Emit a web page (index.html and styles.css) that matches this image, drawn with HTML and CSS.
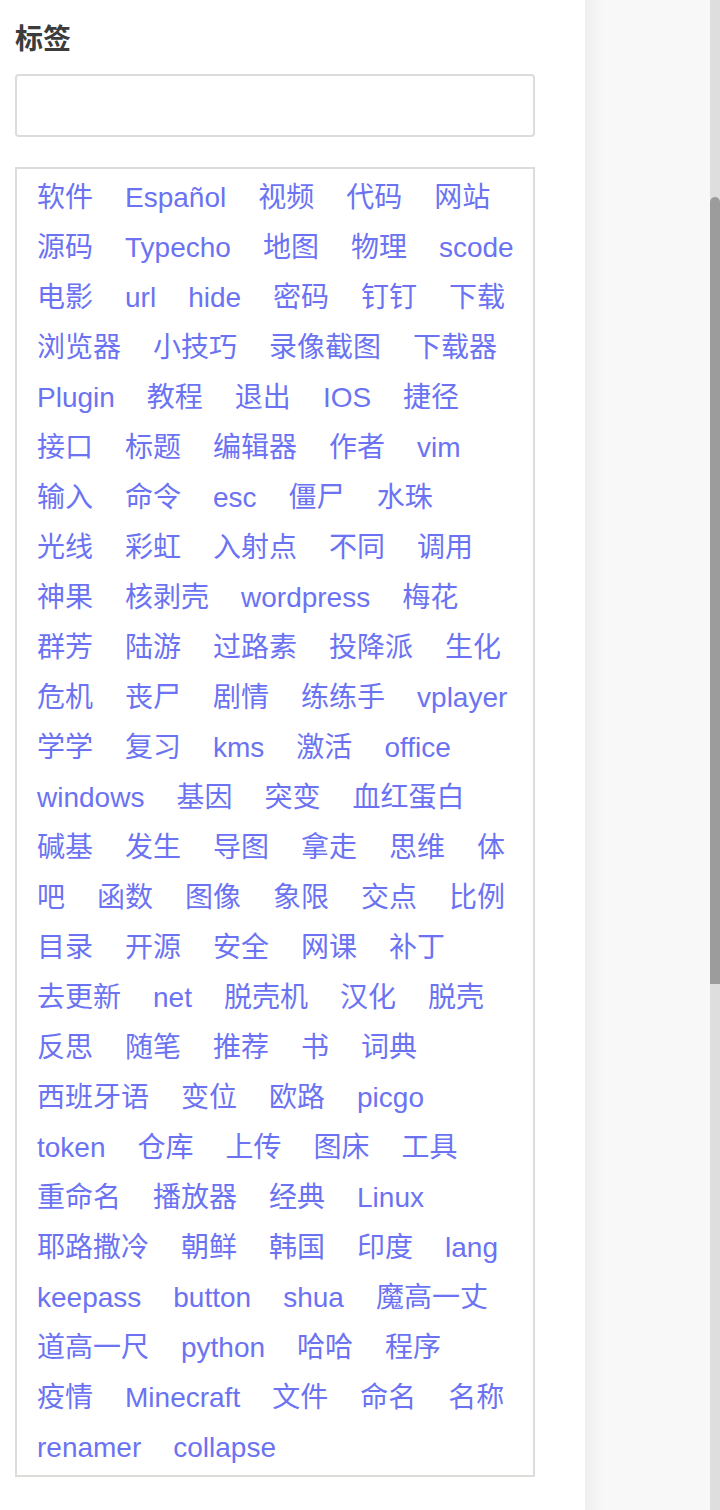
FILE: index.html
```html
<!DOCTYPE html>
<html lang="zh">
<head>
<meta charset="utf-8">
<title>标签</title>
<link rel="stylesheet" href="styles.css">
</head>
<body>
<div class="page">
  <main class="panel">
    <h2 class="title">标签</h2>
    <div class="input"></div>
    <div class="tags">
      <a>软件</a><a>Español</a><a>视频</a><a>代码</a><a>网站</a>
      <a>源码</a><a>Typecho</a><a>地图</a><a>物理</a><a>scode</a>
      <a>电影</a><a>url</a><a>hide</a><a>密码</a><a>钉钉</a><a>下载</a>
      <a>浏览器</a><a>小技巧</a><a>录像截图</a><a>下载器</a>
      <a>Plugin</a><a>教程</a><a>退出</a><a>IOS</a><a>捷径</a>
      <a>接口</a><a>标题</a><a>编辑器</a><a>作者</a><a>vim</a>
      <a>输入</a><a>命令</a><a>esc</a><a>僵尸</a><a>水珠</a>
      <a>光线</a><a>彩虹</a><a>入射点</a><a>不同</a><a>调用</a>
      <a>神果</a><a>核剥壳</a><a>wordpress</a><a>梅花</a>
      <a>群芳</a><a>陆游</a><a>过路素</a><a>投降派</a><a>生化</a>
      <a>危机</a><a>丧尸</a><a>剧情</a><a>练练手</a><a>vplayer</a>
      <a>学学</a><a>复习</a><a>kms</a><a>激活</a><a>office</a>
      <a>windows</a><a>基因</a><a>突变</a><a>血红蛋白</a>
      <a>碱基</a><a>发生</a><a>导图</a><a>拿走</a><a>思维</a><a>体</a>
      <a>吧</a><a>函数</a><a>图像</a><a>象限</a><a>交点</a><a>比例</a>
      <a>目录</a><a>开源</a><a>安全</a><a>网课</a><a>补丁</a>
      <a>去更新</a><a>net</a><a>脱壳机</a><a>汉化</a><a>脱壳</a>
      <a>反思</a><a>随笔</a><a>推荐</a><a>书</a><a>词典</a>
      <a>西班牙语</a><a>变位</a><a>欧路</a><a>picgo</a>
      <a>token</a><a>仓库</a><a>上传</a><a>图床</a><a>工具</a>
      <a>重命名</a><a>播放器</a><a>经典</a><a>Linux</a>
      <a>耶路撒冷</a><a>朝鲜</a><a>韩国</a><a>印度</a><a>lang</a>
      <a>keepass</a><a>button</a><a>shua</a><a>魔高一丈</a>
      <a>道高一尺</a><a>python</a><a>哈哈</a><a>程序</a>
      <a>疫情</a><a>Minecraft</a><a>文件</a><a>命名</a><a>名称</a>
      <a>renamer</a><a>collapse</a>
    </div>
  </main>
  <aside class="side"></aside>
  <div class="scrollbar"><div class="thumb"></div></div>
</div>
</body>
</html>
```

FILE: styles.css
```css
html, body {
  margin: 0;
  padding: 0;
}
body {
  font-family: "Liberation Sans", "Noto Sans CJK SC", sans-serif;
  background: #fff;
}
.page {
  display: grid;
  grid-template-columns: 585px 1fr 10px;
  height: 1510px;
  overflow: hidden;
}
.panel {
  background: #fff;
  padding: 20px 50px 0 15px;
}
.title {
  margin: 0;
  font-size: 28px;
  line-height: 40px;
  font-weight: bold;
  color: #3c3c3c;
}
.input {
  margin-top: 14px;
  height: 59px;
  border: 2px solid #dcdcdc;
  border-radius: 4px;
  background: #fff;
}
.tags {
  margin-top: 30px;
  border: 2px solid #dcdcd8;
  padding: 4px 16px 2px 20px;
  display: flex;
  flex-wrap: wrap;
  column-gap: 32px;
}
.tags a {
  font-size: 28px;
  line-height: 50px;
  color: #6b73f2;
  white-space: nowrap;
}
.side {
  background: linear-gradient(to right, #efefef, #f8f8f8 18px);
}
.scrollbar {
  background: #dedede;
  padding-top: 197px;
}
.thumb {
  height: 787px;
  background: #9c9c9c;
  border-radius: 5px 5px 0 0;
}
```
